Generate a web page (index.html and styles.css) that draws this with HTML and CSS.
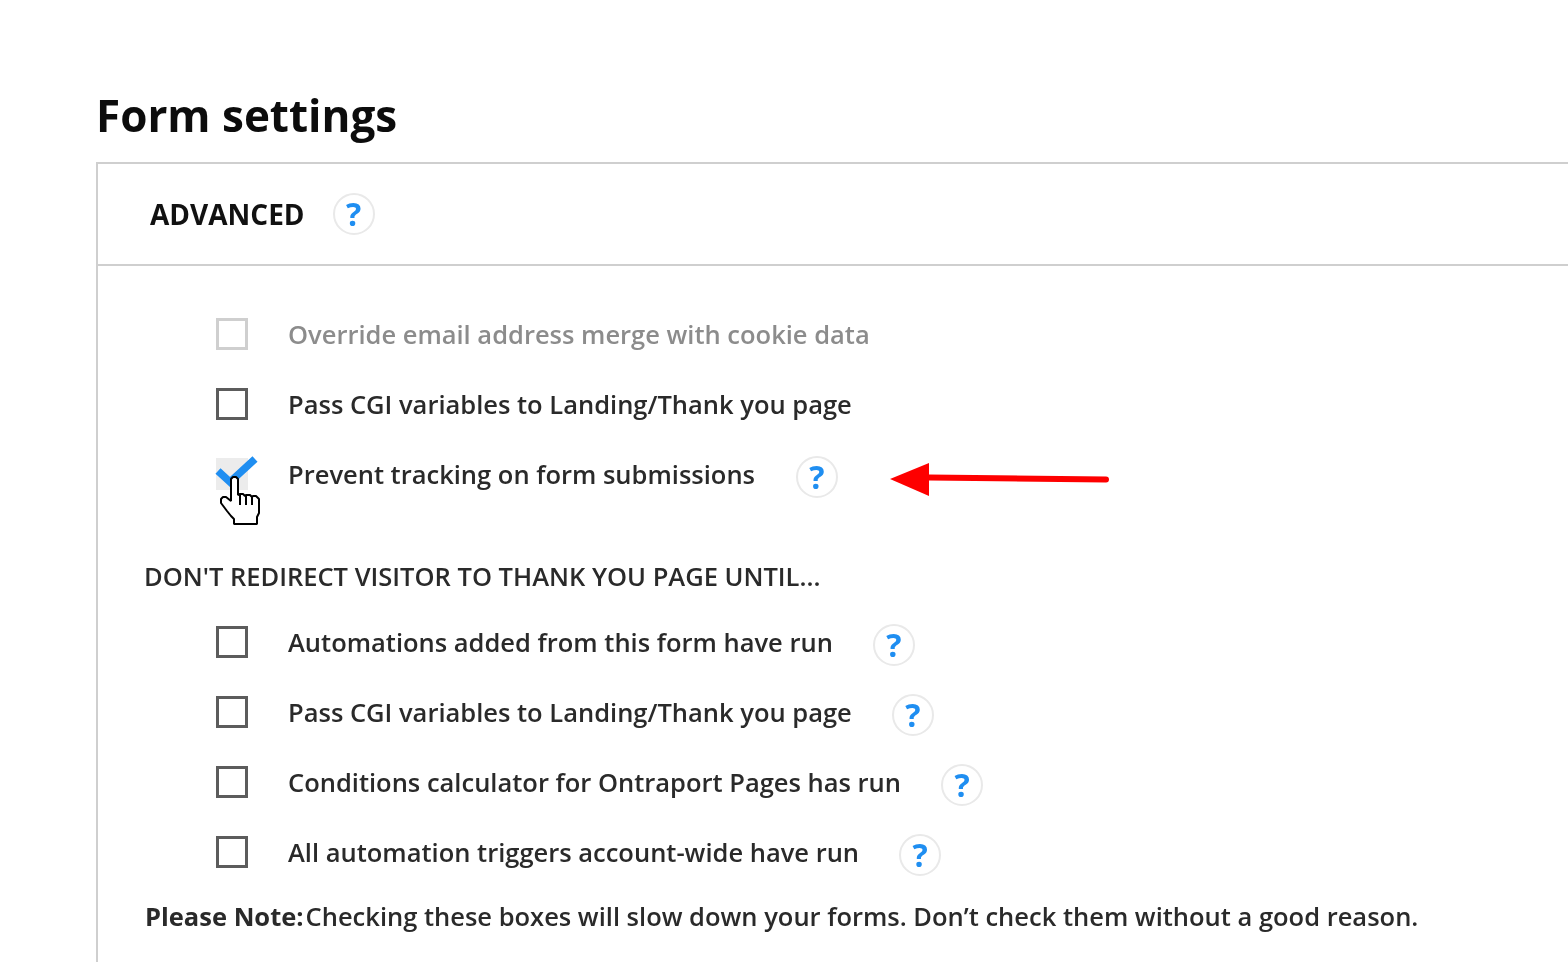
FILE: index.html
```html
<!DOCTYPE html>
<html lang="en">
<head>
<meta charset="utf-8">
<title>Form settings</title>
<link rel="stylesheet" href="styles.css">
</head>
<body>
<main class="page">
  <h1 class="title">Form settings</h1>
  <section class="panel">
    <header class="panel-head">
      <h2 class="panel-title">ADVANCED</h2>
      <span class="help">?</span>
    </header>
    <div class="panel-body">
      <div class="rows">
        <label class="row row-disabled"><span class="box"></span><span class="label">Override email address merge with cookie data</span></label>
        <label class="row"><span class="box"></span><span class="label">Pass CGI variables to Landing/Thank you page</span></label>
        <label class="row row-checked">
          <span class="box box-checked">
            <svg class="tick" viewBox="0 0 44 34" aria-hidden="true"><path d="M3 16 L15 27 L40 4" fill="none" stroke="#1f8ef1" stroke-width="7.5"/></svg>
            <svg class="cursor" viewBox="0 0 42 52" aria-hidden="true"><path d="M14 2h3l2 2v16l2-1h3l2 2 1-1h4l2 2 1-1h3l3 3v14l-2 4v7H15v-5l-3-3-4-5-6-8v-4l2-2h3l5 4V4z" fill="#fff" stroke="#000" stroke-width="2" stroke-linejoin="bevel"/><path d="M21 20v10M27 21v9M33 22v8" stroke="#000" stroke-width="2" fill="none"/></svg>
          </span>
          <span class="label">Prevent tracking on form submissions</span>
          <span class="help help-gap-a">?</span>
          <svg class="arrow" viewBox="0 0 222 36" aria-hidden="true"><path d="M40 15.5 L217 17.5" stroke="#fe0000" stroke-width="6" stroke-linecap="round" fill="none"/><path d="M1 17 L40 1 L40 34 Z" fill="#fe0000"/></svg>
        </label>
      </div>
      <h3 class="section-heading">DON'T REDIRECT VISITOR TO THANK YOU PAGE UNTIL...</h3>
      <div class="rows">
        <label class="row"><span class="box"></span><span class="label">Automations added from this form have run</span><span class="help help-gap-b">?</span></label>
        <label class="row"><span class="box"></span><span class="label">Pass CGI variables to Landing/Thank you page</span><span class="help help-gap-b">?</span></label>
        <label class="row"><span class="box"></span><span class="label">Conditions calculator for Ontraport Pages has run</span><span class="help help-gap-b">?</span></label>
        <label class="row"><span class="box"></span><span class="label">All automation triggers account-wide have run</span><span class="help help-gap-b">?</span></label>
      </div>
      <p class="note"><strong class="note-lead">Please Note:</strong>Checking these boxes will slow down your forms. Don’t check them without a good reason.</p>
    </div>
  </section>
</main>
</body>
</html>
```
FILE: styles.css
```css
* { box-sizing: border-box; }
html, body { margin: 0; height: 100%; overflow: hidden; background: #fff; }
body { font-family: "Open Sans", sans-serif; color: #1c1c1c; }
.page { padding: 87px 0 0 96px; filter: blur(0.45px); }
.title { margin: 0 0 19px 0; font-size: 44px; line-height: 56px; font-weight: 700; color: #0c0c0c; }
.panel { margin-right: -20px; height: 900px; border: 2px solid #cfcfcf; }
.panel-head { height: 102px; padding-left: 52px; display: flex; align-items: center; border-bottom: 2px solid #cfcfcf; }
.panel-title { margin: 0 28px 0 0; font-size: 28px; font-weight: 700; color: #111; }
.help { flex: none; width: 42px; height: 42px; border-radius: 50%; border: 2px solid #e9e9e9; background: #fff; display: flex; align-items: center; justify-content: center; color: #1f8ef1; font-size: 32px; font-weight: 700; line-height: 1; }
.panel-body { padding: 47px 0 0 46px; }
.rows { display: flex; flex-direction: column; gap: 28px; padding-left: 72px; }
.row { position: relative; display: flex; align-items: center; height: 42px; font-size: 25.5px; font-weight: 600; color: #2a2a2a; }
.box { position: relative; flex: none; width: 32px; height: 32px; margin-right: 40px; border: 3px solid #5c5c5c; }
.label { white-space: nowrap; }
.row-disabled { color: #8c8c8c; }
.row-disabled .box { border-color: #cfcfcf; }
.box-checked { border: 0; background: #ececec; }
.tick { position: absolute; left: -1px; top: -3px; width: 44px; height: 34px; }
.cursor { position: absolute; left: 3px; top: 17px; width: 42px; height: 52px; }
.help-gap-a { margin-left: 41px; margin-top: 6px; }
.help-gap-b { margin-left: 40px; margin-top: 6px; }
.arrow { position: absolute; left: 673px; top: 9px; width: 222px; height: 36px; }
.section-heading { margin: 63px 0 27px 0; font-size: 25.5px; line-height: 36px; font-weight: 600; color: #2a2a2a; }
.note { margin: 25px 0 0 1px; font-size: 25.5px; line-height: 36px; font-weight: 600; color: #2a2a2a; white-space: nowrap; }
.note-lead { font-weight: 700; margin-right: 2px; }
```
